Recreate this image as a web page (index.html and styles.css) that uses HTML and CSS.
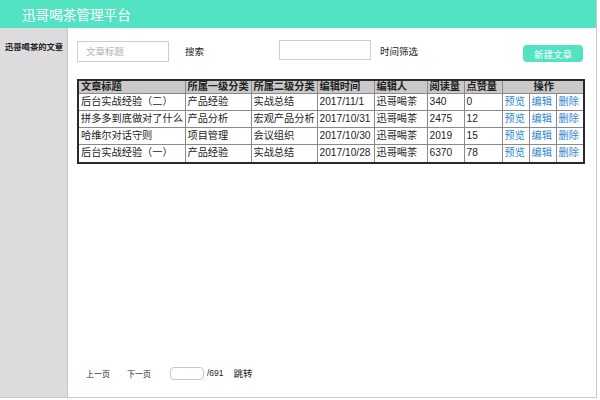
FILE: index.html
```html
<!DOCTYPE html>
<html lang="zh">
<head>
<meta charset="utf-8">
<title>迅哥喝茶管理平台</title>
<link rel="stylesheet" href="styles.css">
</head>
<body>
<div class="app">
  <header class="topbar"><h1 class="brand">迅哥喝茶管理平台</h1></header>
  <div class="main">
    <aside class="sidebar"><div class="nav-item">迅哥喝茶的文章</div></aside>
    <section class="content">
      <div class="toolbar">
        <div class="field field-title">文章标题</div>
        <span class="label label-search">搜索</span>
        <div class="field field-time"></div>
        <span class="label label-time">时间筛选</span>
        <button class="btn-new">新建文章</button>
      </div>
      <table class="grid">
        <colgroup>
          <col class="c-title"><col class="c-cat1"><col class="c-cat2"><col class="c-time"><col class="c-editor"><col class="c-read"><col class="c-like"><col class="c-op1"><col class="c-op2"><col class="c-op3">
        </colgroup>
        <thead>
          <tr><th>文章标题</th><th>所属一级分类</th><th>所属二级分类</th><th>编辑时间</th><th>编辑人</th><th>阅读量</th><th>点赞量</th><th colspan="3" class="center">操作</th></tr>
        </thead>
        <tbody>
          <tr><td>后台实战经验（二）</td><td>产品经验</td><td>实战总结</td><td>2017/11/1</td><td>迅哥喝茶</td><td>340</td><td>0</td><td class="op">预览</td><td class="op">编辑</td><td class="op">删除</td></tr>
          <tr><td>拼多多到底做对了什么</td><td>产品分析</td><td>宏观产品分析</td><td>2017/10/31</td><td>迅哥喝茶</td><td>2475</td><td>12</td><td class="op">预览</td><td class="op">编辑</td><td class="op">删除</td></tr>
          <tr><td>哈维尔对话守则</td><td>项目管理</td><td>会议组织</td><td>2017/10/30</td><td>迅哥喝茶</td><td>2019</td><td>15</td><td class="op">预览</td><td class="op">编辑</td><td class="op">删除</td></tr>
          <tr class="last"><td>后台实战经验（一）</td><td>产品经验</td><td>实战总结</td><td>2017/10/28</td><td>迅哥喝茶</td><td>6370</td><td>78</td><td class="op">预览</td><td class="op">编辑</td><td class="op">删除</td></tr>
        </tbody>
      </table>
      <div class="pager">
        <span class="pg">上一页</span>
        <span class="pg pg-next">下一页</span>
        <div class="pg-input"></div>
        <span class="pg-total">/691</span>
        <span class="pg-go">跳转</span>
      </div>
    </section>
  </div>
</div>
</body>
</html>
```

FILE: styles.css
```css
* { box-sizing: border-box; }
html, body { margin: 0; padding: 0; background: #fff; }
body {
  font-family: "Liberation Sans", "Noto Sans CJK SC", sans-serif;
  color: #222;
}
.app {
  width: 597px;
  height: 398px;
  display: flex;
  flex-direction: column;
  border-right: 1px solid #c9c9c9;
  border-bottom: 1px solid #c9c9c9;
}
.topbar {
  height: 28px;
  background: #52e3c3;
  display: flex;
  align-items: center;
  padding-left: 22px;
}
.brand {
  margin: 0;
  font-size: 13.6px;
  font-weight: normal;
  color: #fff;
}
.main { flex: 1; display: flex; }
.sidebar {
  width: 68px;
  background: #dddbdd;
  border-right: 1px solid #c8c6c8;
  padding-top: 12px;
  padding-left: 5px;
}
.nav-item {
  font-size: 8.3px;
  font-weight: bold;
  color: #222;
  white-space: nowrap;
}
.content {
  flex: 1;
  display: flex;
  flex-direction: column;
  padding-left: 9px;
}
.toolbar {
  display: flex;
  align-items: center;
  margin-top: 12px;
  height: 22px;
}
.field {
  border: 1px solid #cfcfcf;
  background: #fff;
  height: 21px;
  width: 92px;
  font-size: 9.5px;
  color: #b0b0b0;
  display: flex;
  align-items: center;
  padding-left: 8px;
}
.field-time { height: 20px; margin-top: -2px; }
.label { font-size: 9.5px; color: #222; }
.label-search { margin-left: 16px; margin-right: 75px; }
.label-time { margin-left: 9px; }
.btn-new {
  margin-left: auto;
  margin-right: 13px;
  margin-top: 5px;
  width: 60px;
  height: 17px;
  border: none;
  border-radius: 4px;
  background: #52e3c3;
  color: #fff;
  font-family: "Liberation Sans", "Noto Sans CJK SC", sans-serif;
  font-size: 9.5px;
  padding: 0;
}
.grid {
  margin-top: 17px;
  width: 507px;
  table-layout: fixed;
  border-collapse: collapse;
  border: 2px solid #2a2a2a;
  font-size: 10.2px;
}
.c-title { width: 107px; }
.c-cat1 { width: 66px; }
.c-cat2 { width: 66px; }
.c-time { width: 57px; }
.c-editor { width: 53px; }
.c-read { width: 37px; }
.c-like { width: 38px; }
.c-op1 { width: 27px; }
.c-op2 { width: 27px; }
.c-op3 { width: 28px; }
.grid th, .grid td {
  border: 1px solid #8a8a8a;
  padding: 0 0 0 2px;
  text-align: left;
  white-space: nowrap;
  overflow: hidden;
  line-height: 12px;
}
.grid th {
  background: #c9c9c9;
  font-weight: bold;
  height: 13px;
}
.grid th.center { text-align: center; }
.grid td { height: 17px; }
.grid td.op { color: #2f87d0; }
.grid tr.last td { height: 18px; }
.pager {
  margin-top: auto;
  margin-bottom: 17px;
  margin-left: 9px;
  display: flex;
  align-items: center;
  font-size: 8px;
  color: #222;
}
.pg-next { margin-left: 17px; }
.pg-input {
  margin-left: 19px;
  width: 34px;
  height: 13px;
  border: 1px solid #c8c8c8;
  border-radius: 4px;
}
.pg-total { margin-left: 3px; font-size: 8.5px; }
.pg-go { margin-left: 10px; font-size: 9.5px; }
```
